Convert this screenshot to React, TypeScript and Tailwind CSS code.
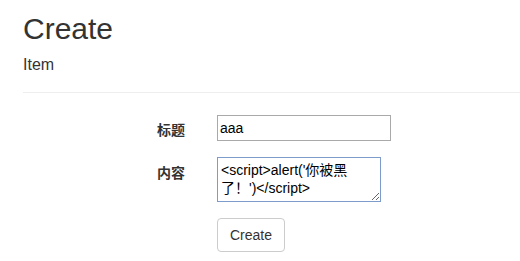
export default function App() {
  return (
    <div className="min-h-[261px] w-[520px] bg-white pl-[23px] text-[#333] [font-family:'Liberation_Sans','Noto_Sans_CJK_SC',sans-serif]">
      <h1 className="pt-[12px] text-[30px] leading-[33px]">Create</h1>
      <h4 className="mt-[8px] text-[16px] leading-[24px]">Item</h4>
      <hr className="mt-[15px] border-t border-[#eee]" />

      <form className="mt-[22px] flex flex-col gap-[16px]">
        <div className="flex items-start">
          <label className="w-[162px] pt-[5px] text-right text-[14px] font-bold leading-5">标题</label>
          <input
            type="text"
            defaultValue="aaa"
            className="ml-[32px] h-[26px] w-[174px] border border-[#a9a9a9] px-[2px] text-[14px] text-black outline-none"
          />
        </div>
        <div className="flex items-start">
          <label className="w-[162px] pt-[6px] text-right text-[14px] font-bold leading-5">内容</label>
          <textarea
            defaultValue={"<script>alert('你被黑了！')</script>"}
            className="ml-[32px] h-[45px] w-[164px] border border-[#7d9bcb] pl-[3px] pr-[24px] pt-[3px] text-[14px] leading-[18px] text-black outline-none"
          />
        </div>
        <div className="flex">
          <div className="w-[162px]" />
          <button
            type="button"
            className="ml-[32px] h-[34px] rounded-[4px] border border-[#ccc] bg-white px-[12px] text-[14px] leading-5 text-[#333]"
          >
            Create
          </button>
        </div>
      </form>
    </div>
  );
}
